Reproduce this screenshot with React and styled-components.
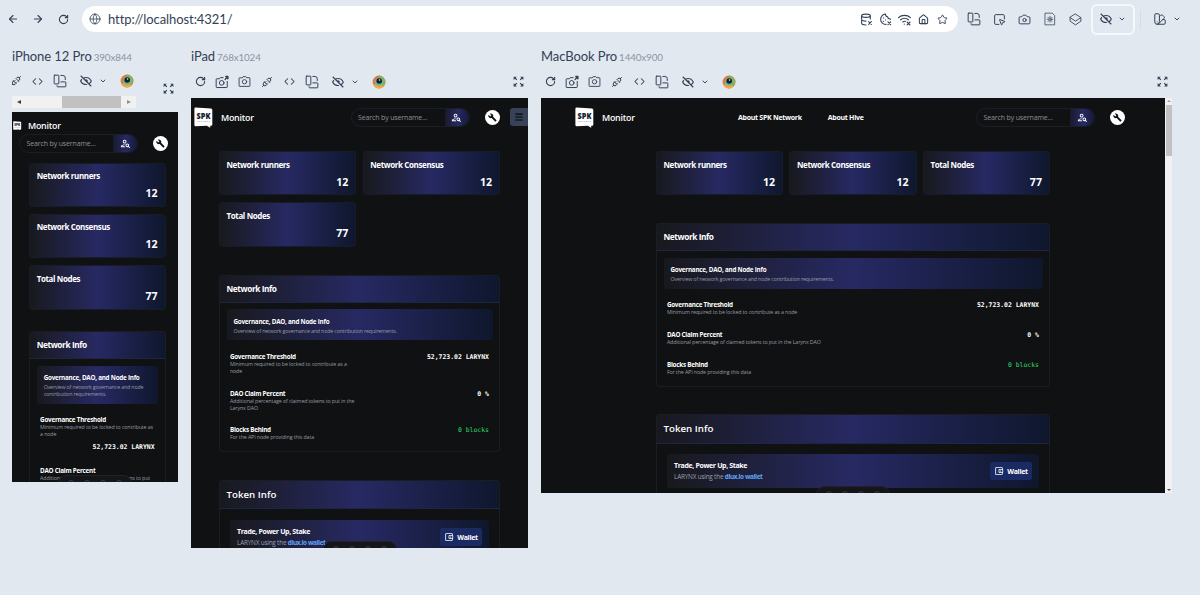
import React from 'react';
import styled, { createGlobalStyle, css } from 'styled-components';
import {
	ArrowLeft,
	ArrowRight,
	Camera,
	ChevronDown,
	Code,
	Globe,
	House,
	Menu,
	RotateCw,
	SquareMousePointer,
	Star,
	SwatchBook,
} from 'lucide-react';
import { BiHide } from 'react-icons/bi';
import { MdBuild, MdOutlineAccountBalanceWallet, MdOutlinePersonSearch, MdZoomOutMap } from 'react-icons/md';
import { TbPlugConnected } from 'react-icons/tb';

const GlobalStyle = createGlobalStyle`
	* {
		box-sizing: border-box;
	}
	body {
		margin: 0;
		background: #e2e8f0;
		color: #334155;
		font-family: Lato, sans-serif;
		overflow: hidden;
	}
	svg {
		display: block;
		flex: none;
	}
`;

const gradient = css`
	background: linear-gradient(90deg, #18191d 0%, #272963 50%, #0f172d 100%);
`;

const Window = styled.div`
	height: 595px;
	display: flex;
	flex-direction: column;
`;

/* ---------- browser bar ---------- */
const TopBar = styled.header`
	height: 38px;
	display: flex;
	align-items: center;
`;
const NavButtons = styled.div`
	display: flex;
	width: 82px;
`;
const Slot = styled.span`
	width: ${({ w }) => w || 22.3}px;
	flex: none;
	display: flex;
	justify-content: center;
	align-items: center;
`;
const AddressBar = styled.div`
	width: 876px;
	height: 26px;
	border-radius: 13px;
	background: #fff;
	display: flex;
	align-items: center;
	padding: 0 6px 0 7px;
`;
const Url = styled.span`
	flex: 1;
	font-size: 13px;
	letter-spacing: -0.08px;
	margin-left: 7px;
`;
const BarTools = styled.div`
	display: flex;
	margin-left: 3px;
`;
const ActiveTool = styled.div`
	width: 44px;
	height: 31px;
	margin-left: 2px;
	border: 2px solid #f6f9fc;
	border-radius: 6px;
	display: flex;
	align-items: center;
	justify-content: center;
	gap: 5px;
`;
const Divider = styled.i`
	width: 1px;
	height: 18px;
	margin: 0 12px 0 5px;
	background: #d5dce6;
`;
const Swatches = styled.div`
	display: flex;
	align-items: center;
	gap: 6px;
`;

/* ---------- devices ---------- */
const Devices = styled.main`
	display: flex;
	align-items: flex-start;
	gap: 13px;
	padding: 8px 0 0 12px;
`;
const Device = styled.section`
	width: ${({ w }) => w}px;
	flex: none;
`;
const DeviceTitle = styled.h2`
	margin: 0;
	height: 20px;
	line-height: 20px;
	font-size: 13px;
	font-weight: 400;
	letter-spacing: -0.08px;
	white-space: nowrap;
	small {
		margin-left: 2px;
		font-size: 9.8px;
		letter-spacing: -0.12px;
		color: #8a94a4;
	}
`;
const DeviceBar = styled.div`
	height: ${({ tall }) => (tall ? 46 : 32)}px;
	display: flex;
	align-items: ${({ tall }) => (tall ? 'stretch' : 'center')};
	justify-content: space-between;
	padding: 0 3px 1px 0;
`;
const ScrollArea = styled.div`
	width: 124px;
	overflow: hidden;
`;
const Tools = styled.div`
	height: 30px;
	display: flex;
	align-items: center;
	margin-left: ${({ shift }) => shift}px;
`;
const Expand = styled.div`
	display: flex;
	align-items: center;
`;
const HScroll = styled.div`
	height: 12px;
	background: #f1f1f1;
	display: flex;
	align-items: center;
	padding: 0 5px;
`;
const HThumb = styled.i`
	width: 61px;
	height: 12px;
	margin: 0 6px 0 41px;
	background: #c1c1c1;
`;
const Triangle = styled.i`
	border: 2.5px solid transparent;
	${({ side, color }) => `border-${side === 'left' ? 'right' : side === 'right' ? 'left' : side}-color: ${color};`}
	${({ side }) => side === 'left' && 'border-right-width: 4px; border-left-width: 0;'}
	${({ side }) => side === 'right' && 'border-left-width: 4px; border-right-width: 0;'}
`;
const Frame = styled.div`
	display: flex;
`;
const VScroll = styled.div`
	width: 7px;
	background: #f1f1f1;
	display: flex;
	flex-direction: column;
	align-items: center;
	justify-content: space-between;
`;
const VThumb = styled.i`
	width: 6px;
	height: 51px;
	margin: 3px 0 auto;
	background: #c1c1c1;
`;

/* ---------- monitor page ---------- */
const Page = styled.div`
	position: relative;
	flex: 1;
	height: ${({ h }) => h}px;
	overflow: hidden;
	background: #101112;
	color: #fff;
	font-family: 'Open Sans', 'Noto Sans', sans-serif;
`;
const Nav = styled.nav`
	height: 53px;
	display: flex;
	align-items: flex-start;
	padding: ${({ pad }) => pad};
`;
const PhoneNav = styled.div`
	height: 50.5px;
	padding: 5.5px 0 0 1px;
`;
const NavRow = styled.div`
	height: 16px;
	display: flex;
	align-items: center;
`;
const PhoneSearch = styled.div`
	display: flex;
	align-items: center;
	padding-left: 6px;
`;
const Brand = styled.b`
	margin: ${({ mt }) => mt || 0}px 0 0 ${({ ml }) => ml}px;
	width: 34px;
	line-height: 20px;
	font-size: 8.9px;
	font-weight: 600;
	letter-spacing: -0.25px;
`;
const NavLinks = styled.div`
	display: flex;
	gap: 26px;
	width: 238px;
	margin: 1px 0 0 102px;
	font-size: 7px;
	font-weight: 700;
	line-height: 20px;
	letter-spacing: -0.28px;
	white-space: nowrap;
`;
const Search = styled.div`
	width: 119px;
	height: 19px;
	margin-top: ${({ mt }) => mt}px;
	display: flex;
	flex: none;
	border: 1px solid #1b1e24;
	border-radius: 10px;
	overflow: hidden;
`;
const Placeholder = styled.span`
	flex: 1;
	padding-left: 6.5px;
	font-size: 7px;
	line-height: 18px;
	letter-spacing: -0.14px;
	white-space: nowrap;
	color: #8d9198;
`;
const SearchButton = styled.span`
	width: 24px;
	display: flex;
	align-items: center;
	justify-content: center;
	background: linear-gradient(90deg, #191a2e, #272963 55%, #14193a);
`;
const WrenchButton = styled.span`
	width: 15px;
	height: 15px;
	margin: ${({ m }) => m};
	flex: none;
	border-radius: 50%;
	background: #fff;
	color: #111;
	display: flex;
	align-items: center;
	justify-content: center;
`;
const MenuButton = styled.span`
	width: 18px;
	height: 18px;
	margin: 1px 0 0 10px;
	flex: none;
	border-radius: 3px 0 0 3px;
	background: #374256;
	color: #05070a;
	display: flex;
	align-items: center;
	justify-content: center;
`;
const Spacer = styled.span`
	width: 95.5px;
	flex: none;
`;
const Content = styled.div`
	padding: ${({ pad }) => pad};
`;
const Cards = styled.div`
	display: grid;
	grid-template-columns: repeat(${({ cols }) => cols}, 1fr);
	gap: 7.2px 6.4px;
`;
const Card = styled.div`
	height: 44.3px;
	padding: 7.5px 7px 0 6.5px;
	border: 1px solid #171c2a;
	border-radius: 3px;
	${gradient}
`;
const CardTitle = styled.div`
	font-size: 8px;
	font-weight: 700;
	line-height: 10px;
	letter-spacing: -0.38px;
`;
const CardValue = styled.div`
	margin-top: 5px;
	font-size: 10.6px;
	font-weight: 700;
	line-height: 14px;
	text-align: right;
`;
const Panel = styled.div`
	margin-top: ${({ mt }) => mt}px;
	border: 1px solid #1a1d24;
	border-radius: 3px;
	overflow: hidden;
`;
const PanelHeader = styled.div`
	height: ${({ big }) => (big ? 28.5 : 27)}px;
	line-height: ${({ big }) => (big ? 28 : 26)}px;
	padding-left: 6.5px;
	border-bottom: 1px solid #1d2742;
	font-size: ${({ big }) => (big ? 9.7 : 8.3)}px;
	font-weight: ${({ big }) => (big ? 600 : 700)};
	letter-spacing: ${({ big }) => (big ? 0.02 : -0.42)}px;
	${gradient}
`;
const PanelBody = styled.div`
	padding: 6.5px 6.5px 2.5px;
`;
const Notice = styled.div`
	padding: 8.5px 7px 5.5px;
	border-radius: 3px;
	${gradient}
`;
const NoticeTitle = styled.div`
	font-size: 6.3px;
	font-weight: 700;
	line-height: 8px;
	letter-spacing: -0.24px;
	white-space: nowrap;
`;
const Sub = styled.div`
	margin-top: ${({ mt }) => mt || 0}px;
	max-width: ${({ max }) => (max ? `${max}px` : 'none')};
	font-size: 5.3px;
	line-height: 7.1px;
	letter-spacing: ${({ mt }) => (mt ? -0.165 : -0.12)}px;
	color: #969ba5;
`;
const Rows = styled.div`
	padding: 5px 3.5px 0 3.4px;
`;
const Row = styled.div`
	display: flex;
	flex-direction: ${({ stacked }) => (stacked ? 'column' : 'row')};
	justify-content: space-between;
	padding: 7.35px 0 ${({ stacked }) => (stacked ? 9 : 7.35)}px;
`;
const RowValue = styled.div`
	margin-top: ${({ stacked }) => (stacked ? 4.2 : 0)}px;
	text-align: right;
	font-family: 'DejaVu Sans Mono', monospace;
	font-size: 6.45px;
	font-weight: ${({ ok }) => (ok ? 400 : 700)};
	line-height: 8px;
	color: ${({ ok }) => (ok ? '#2bdc6c' : '#fff')};
`;
const TokenBody = styled.div`
	padding: 10.7px 10px 20px;
`;
const TokenNotice = styled.div`
	height: 34px;
	display: flex;
	align-items: center;
	justify-content: space-between;
	padding: 0 7px;
	border-radius: 3px;
	${gradient}
`;
const TokenTitle = styled.div`
	font-size: 7px;
	font-weight: 700;
	line-height: 10px;
	letter-spacing: -0.35px;
`;
const TokenText = styled.div`
	margin-top: 1px;
	font-size: 6.4px;
	line-height: 10px;
	letter-spacing: -0.2px;
	color: #9aa0ad;
	b {
		font-weight: 700;
		letter-spacing: -0.38px;
		color: #60a5fa;
	}
`;
const WalletButton = styled.span`
	width: 42px;
	height: 18px;
	display: flex;
	align-items: center;
	justify-content: center;
	gap: 3px;
	border-radius: 2.5px;
	background: #1a2a63;
	font-size: 7px;
	font-weight: 700;
	letter-spacing: -0.3px;
`;
// developer toolbar floating over the bottom edge of each page
const DevToolbar = styled.div`
	position: absolute;
	left: 50%;
	bottom: -10px;
	width: 74px;
	height: 17px;
	margin-left: -37px;
	padding: 3.5px 9px 0;
	border: 1px solid #202228;
	border-radius: 9px;
	background: #15161a;
	display: flex;
	justify-content: space-between;
	i {
		width: 6px;
		height: 7px;
		border-radius: 3px;
		border: 1px solid #3c3d42;
	}
`;

/* ---------- drawn icons ---------- */
const Line = ({ size = 14, sw = 1.7, children }) => (
	<svg
		width={size}
		height={size}
		viewBox="0 0 24 24"
		fill="none"
		stroke="currentColor"
		strokeWidth={sw}
		strokeLinecap="round"
		strokeLinejoin="round"
	>
		{children}
	</svg>
);

const RotateIcon = () => (
	<Line>
		<rect x="2" y="2" width="8" height="15" rx="1" />
		<path d="M13.5 13.5H21a1 1 0 0 1 1 1V21a1 1 0 0 1-1 1H8a1 1 0 0 1-1-1v-1" />
		<path d="M13.5 2.5h3.5a4 4 0 0 1 4 4v3" />
	</Line>
);
const CameraIcon = () => (
	<Line size={13}>
		<path d="M8 5l1.500-2h5L16 5h5a1 1 0 0 1 1 1v14a1 1 0 0 1-1 1H3a1 1 0 0 1-1-1V6a1 1 0 0 1 1-1z" />
		<circle cx="12" cy="12.500" r="4" />
	</Line>
);
const FullShotIcon = () => (
	<Line size={14}>
		<path d="M14 4.500H9L7.500 6.500H3a1 1 0 0 0-1 1v13a1 1 0 0 0 1 1h17a1 1 0 0 0 1-1V11" />
		<circle cx="11.5" cy="13.500" r="4" />
		<path d="M17.500 7.500L22 2.500M18.500 2.500H22v4" strokeWidth="2.500" />
	</Line>
);
const LayersIcon = () => (
	<Line size={13} sw={1.600}>
		<path d="M12 2l10 6.500-10 6.500L2 8.500z" />
		<path d="M2 9v6L12 22l10-7V9" />
	</Line>
);
const DatabaseX = () => (
	<Line size={13} sw={2}>
		<ellipse cx="11" cy="5" rx="8" ry="3" />
		<path d="M3 5v14c0 1.7 3 3 8 3M19 5v6M3 12c0 1.7 3.600 3 8 3" />
		<path d="M16 16l5 5M21 16l-5 5" />
	</Line>
);
const CookieX = () => (
	<Line size={13} sw={2}>
		<path d="M12 2a9.500 9.500 0 1 0 1 19M12 2c0 3 2 5 4 5 0 2 2 4 5 4v1" />
		<path d="M8 9h.1M12 13h.1M8 15.500h.1M16.500 16.500l5 5M21.500 16.500l-5 5" />
	</Line>
);
const WifiX = () => (
	<Line size={13} sw={2.200}>
		<path d="M1 8.500C7 3 17 3 23 8.500M5 12.500c4-3.500 10-3.500 14 0M9 16.500c1.500-1.200 3-1.500 4.500-1M11.500 20.500h.1" />
		<path d="M17 17l5 5M22 17l-5 5" />
	</Line>
);
const SunDoc = () => (
	<Line size={14} sw={1.300}>
		<path d="M4 2h12l4 4v16H4z" />
		<circle cx="12" cy="12.500" r="2" />
		<path d="M12 7.500v2M12 15.500v2M7 12.500h2M15 12.500h2M8.500 9l1.400 1.400M14.200 14.700l1.400 1.400M15.600 9l-1.400 1.400M9.900 14.700l-1.400 1.400" />
	</Line>
);
const EyeLogo = () => (
	<svg width="14" height="14" viewBox="0 0 14 14">
		<circle cx="7" cy="7" r="6.400" fill="#e8743b" />
		<path d="M7 .600A6.400 6.400 0 0 1 13.400 7c0 2-1 4-2.400 5L7 7z" fill="#8fae5a" />
		<path d="M1.500 10.200C3.500 14 9 14.500 11.500 11.500L7 7z" fill="#f5a53d" />
		<circle cx="7" cy="6.700" r="4.300" fill="#6fb592" />
		<circle cx="7.200" cy="6" r="2.800" fill="#0d2230" />
		<circle cx="7.600" cy="5" r=".8" fill="#e8f5f5" />
	</svg>
);
const SpkLogo = ({ size = 19 }) => (
	<svg width={size} height={(size * 21) / 19} viewBox="0 0 19 21">
		<path
			d="M1.500.500L17 1.400Q18.300 1.500 18.300 3V17.800Q18.300 18.800 17 18.800H16.200V20.700L12.800 18.800L1.800 19.300Q.400 19.300.400 18V1.700Q.400.400 1.500.500Z"
			fill="#fff"
		/>
		<text
			x="2.600"
			y="11.700"
			textLength="13.800"
			lengthAdjust="spacingAndGlyphs"
			fontFamily="Open Sans"
			fontSize="8"
			fontWeight="800"
			fill="#141a2c"
		>
			SPK
		</text>
		<text x="3" y="14.600" textLength="13" fontFamily="Open Sans" fontSize="2" fill="#55606e">
			NETWORK
		</text>
	</svg>
);

const stats = [
	{ title: 'Network runners', value: '12' },
	{ title: 'Network Consensus', value: '12' },
	{ title: 'Total Nodes', value: '77' },
];

const info = [
	{
		title: 'Governance Threshold',
		text: 'Minimum required to be locked to contribute as a node',
		value: '52,723.02 LARYNX',
	},
	{
		title: 'DAO Claim Percent',
		text: 'Additional percentage of claimed tokens to put in the Larynx DAO',
		value: '0 %',
	},
	{ title: 'Blocks Behind', text: 'For the API node providing this data', value: '0 blocks', ok: true },
];

const SearchBox = ({ mt = 0 }) => (
	<Search mt={mt}>
		<Placeholder>Search by username...</Placeholder>
		<SearchButton>
			<MdOutlinePersonSearch size={11} />
		</SearchButton>
	</Search>
);

const Wrench = ({ m }) => (
	<WrenchButton m={m}>
		<MdBuild size={9} />
	</WrenchButton>
);

const PageNav = ({ kind }) => {
	if (kind === 'phone') {
		return (
			<PhoneNav>
				<NavRow>
					<SpkLogo size={8.5} />
					<Brand ml={6.5}>Monitor</Brand>
				</NavRow>
				<PhoneSearch>
					<SearchBox />
					<Wrench m="0 0 0 15px" />
				</PhoneSearch>
			</PhoneNav>
		);
	}
	return (
		<Nav pad={kind === 'mac' ? '9px 0 0 34px' : '9px 0 0 3px'}>
			<SpkLogo />
			<Brand ml={8} mt={1}>
				Monitor
			</Brand>
			{kind === 'mac' ? (
				<NavLinks>
					<span>About SPK Network</span>
					<span>About Hive</span>
				</NavLinks>
			) : (
				<Spacer />
			)}
			<SearchBox mt={1} />
			<Wrench m="3px 0 0 15px" />
			{kind === 'pad' && (
				<MenuButton>
					<Menu size={10} strokeWidth={2.600} />
				</MenuButton>
			)}
		</Nav>
	);
};

const MonitorPage = ({ kind, height, cols, pad, gap }) => {
	const phone = kind === 'phone';
	// the phone viewport ends inside the second row
	const rows = phone ? info.slice(0, 2) : info;
	return (
		<Page h={height}>
			<PageNav kind={kind} />
			<Content pad={pad}>
				<Cards cols={cols}>
					{stats.map((s) => (
						<Card key={s.title}>
							<CardTitle>{s.title}</CardTitle>
							<CardValue>{s.value}</CardValue>
						</Card>
					))}
				</Cards>
				<Panel mt={gap}>
					<PanelHeader>Network Info</PanelHeader>
					<PanelBody>
						<Notice>
							<NoticeTitle>Governance, DAO, and Node Info</NoticeTitle>
							<Sub mt={2}>Overview of network governance and node contribution requirements.</Sub>
						</Notice>
						<Rows>
							{rows.map((r) => (
								<Row key={r.title} stacked={phone ? 1 : 0}>
									<div>
										<NoticeTitle>{r.title}</NoticeTitle>
										<Sub max={kind === 'pad' ? 128 : 0}>{r.text}</Sub>
									</div>
									<RowValue stacked={phone ? 1 : 0} ok={r.ok ? 1 : 0}>
										{r.value}
									</RowValue>
								</Row>
							))}
						</Rows>
					</PanelBody>
				</Panel>
				{!phone && (
					<Panel mt={27.5}>
						<PanelHeader big="1">Token Info</PanelHeader>
						<TokenBody>
							<TokenNotice>
								<div>
									<TokenTitle>Trade, Power Up, Stake</TokenTitle>
									<TokenText>
										LARYNX using the <b>dlux.io wallet</b>
									</TokenText>
								</div>
								<WalletButton>
									<MdOutlineAccountBalanceWallet size={10} />
									Wallet
								</WalletButton>
							</TokenNotice>
						</TokenBody>
					</Panel>
				)}
			</Content>
			<DevToolbar>
				<i />
				<i />
				<i />
				<i />
			</DevToolbar>
		</Page>
	);
};

const DeviceTools = ({ compact }) => (
	<Tools shift={compact ? -7.5 : -2}>
		{!compact && (
			<>
				<Slot>
					<RotateCw size={11} strokeWidth={2.400} />
				</Slot>
				<Slot>
					<FullShotIcon />
				</Slot>
				<Slot>
					<CameraIcon />
				</Slot>
			</>
		)}
		<Slot>
			<TbPlugConnected size={12} />
		</Slot>
		<Slot w={compact ? 21.500 : 22.300}>
			<Code size={11} strokeWidth={2.200} />
		</Slot>
		<Slot w={23}>
			<RotateIcon />
		</Slot>
		<Slot w={29.500}>
			<BiHide size={14} />
		</Slot>
		<Slot w={4}>
			<ChevronDown size={8} strokeWidth={2.800} />
		</Slot>
		<Slot w={44}>
			<EyeLogo />
		</Slot>
	</Tools>
);

const App = () => {
	return (
		<Window>
			<GlobalStyle />
			<TopBar>
				<NavButtons>
					<Slot w={25}>
						<ArrowLeft size={12} strokeWidth={2.200} />
					</Slot>
					<Slot w={25}>
						<ArrowRight size={12} strokeWidth={2.200} />
					</Slot>
					<Slot w={26}>
						<RotateCw size={11} strokeWidth={2.400} />
					</Slot>
				</NavButtons>
				<AddressBar>
					<Globe size={12} strokeWidth={1.600} />
					<Url>http://localhost:4321/</Url>
					<Slot w={19}>
						<DatabaseX />
					</Slot>
					<Slot w={19}>
						<CookieX />
					</Slot>
					<Slot w={19}>
						<WifiX />
					</Slot>
					<Slot w={19}>
						<House size={11} strokeWidth={2.300} />
					</Slot>
					<Slot w={19}>
						<Star size={11} />
					</Slot>
				</AddressBar>
				<BarTools>
					<Slot w={25.5}>
						<RotateIcon />
					</Slot>
					<Slot w={25.5}>
						<SquareMousePointer size={13} strokeWidth={1.800} />
					</Slot>
					<Slot w={25.5}>
						<Camera size={13} strokeWidth={1.800} />
					</Slot>
					<Slot w={25.5}>
						<SunDoc />
					</Slot>
					<Slot w={25.5}>
						<LayersIcon />
					</Slot>
				</BarTools>
				<ActiveTool>
					<BiHide size={14} />
					<ChevronDown size={8} strokeWidth={2.800} />
				</ActiveTool>
				<Divider />
				<Swatches>
					<SwatchBook size={14} strokeWidth={1.700} />
					<ChevronDown size={8} strokeWidth={2.800} />
				</Swatches>
			</TopBar>
			<Devices>
				<Device w={166}>
					<DeviceTitle>
						iPhone 12 Pro<small>390x844</small>
					</DeviceTitle>
					<DeviceBar tall="1">
						<ScrollArea>
							<DeviceTools compact />
							<HScroll>
								<Triangle side="left" color="#404040" />
								<HThumb />
								<Triangle side="right" color="#909090" />
							</HScroll>
						</ScrollArea>
						<Expand>
							<MdZoomOutMap size={13} />
						</Expand>
					</DeviceBar>
					<Frame>
						<MonitorPage kind="phone" height={370} cols={1} pad="0 12.400px 0 17.200px" gap={21.500} />
					</Frame>
				</Device>
				<Device w={337}>
					<DeviceTitle>
						iPad<small>768x1024</small>
					</DeviceTitle>
					<DeviceBar>
						<DeviceTools />
						<Expand>
							<MdZoomOutMap size={13} />
						</Expand>
					</DeviceBar>
					<Frame>
						<MonitorPage kind="pad" height={450} cols={2} pad="0 28px" gap={28} />
					</Frame>
				</Device>
				<Device w={631}>
					<DeviceTitle>
						MacBook Pro<small>1440x900</small>
					</DeviceTitle>
					<DeviceBar>
						<DeviceTools />
						<Expand>
							<MdZoomOutMap size={13} />
						</Expand>
					</DeviceBar>
					<Frame>
						<MonitorPage kind="mac" height={395} cols={3} pad="0 115px" gap={28} />
						<VScroll>
							<Triangle side="bottom" color="#a0a0a0" />
							<VThumb />
							<Triangle side="top" color="#505050" />
						</VScroll>
					</Frame>
				</Device>
			</Devices>
		</Window>
	);
};

export default App;
